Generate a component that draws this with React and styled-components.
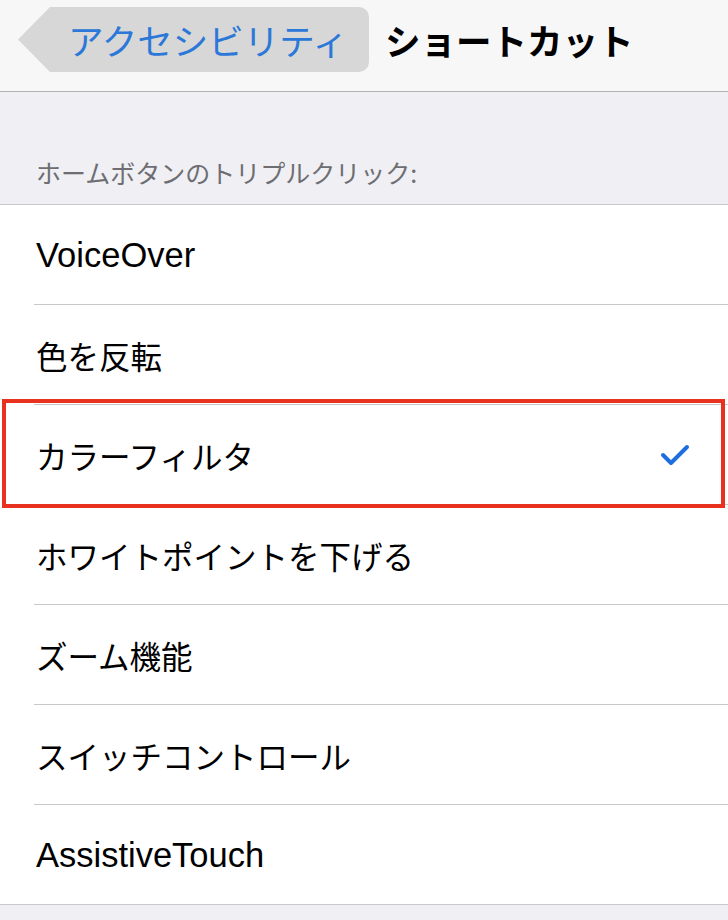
import React from "react";
import styled, { createGlobalStyle } from "styled-components";

const GlobalStyle = createGlobalStyle`
  html, body {
    margin: 0;
    padding: 0;
    background: #efeff4;
  }
  body {
    font-family: "Liberation Sans", "Noto Sans CJK JP", sans-serif;
    -webkit-font-smoothing: antialiased;
  }
`;

const Page = styled.div`
  width: 728px;
  min-height: 920px;
  background: #efeff4;
`;

const NavBar = styled.div`
  height: 91px;
  background: #f7f7f7;
  border-bottom: 1px solid #b2b2b2;
  display: flex;
  align-items: center;
  padding-left: 18px;
  gap: 16px;
  box-sizing: content-box;
`;

const BackButton = styled.div`
  height: 65px;
  margin-top: -12px;
  display: flex;
  align-items: center;
  padding: 0 21px 0 50px;
  background: #d7d7d7;
  border-radius: 0 10px 10px 0;
  clip-path: polygon(0 50%, 32px 0, 100% 0, 100% 100%, 32px 100%);
  color: #2b78d8;
  font-family: "Noto Sans CJK JP", sans-serif;
  font-size: 35.5px;
  line-height: 1;
`;

const Title = styled.div`
  margin-top: -12px;
  font-family: "Noto Sans CJK JP", sans-serif;
  font-weight: 700;
  font-size: 35.5px;
  color: #000;
  line-height: 1;
`;

const SectionHeader = styled.div`
  height: 112px;
  display: flex;
  align-items: flex-end;
  padding: 0 0 14px 36px;
  box-sizing: border-box;
  font-family: "Noto Sans CJK JP", sans-serif;
  font-size: 25px;
  color: #6d6d72;
`;

const List = styled.div`
  background: #fff;
  border-top: 1px solid #c8c7cc;
`;

const Row = styled.div`
  position: relative;
  height: 100px;
  display: flex;
  align-items: center;
  justify-content: space-between;
  padding: 0 38px 0 36px;
  box-sizing: border-box;
  font-size: ${(p) => (p.$latin ? "34.5px" : "31.5px")};
  font-family: ${(p) =>
    p.$latin
      ? `"Liberation Sans", "Noto Sans CJK JP", sans-serif`
      : `"Noto Sans CJK JP", sans-serif`};
  color: #000;

  &::before {
    content: "";
    position: absolute;
    left: ${(p) => (p.$last ? "0" : "34px")};
    right: 0;
    bottom: 0;
    height: 1px;
    background: #c8c7cc;
  }

  ${(p) =>
    p.$marked &&
    `
    &::after {
      content: "";
      position: absolute;
      top: -6px;
      bottom: -3px;
      left: 2px;
      right: 3px;
      border: 4px solid #e8321f;
    }
  `}
`;

const Check = () => (
  <svg width="30" height="24" viewBox="0 0 30 24">
    <polyline
      points="3,12 11,20 27,4"
      fill="none"
      stroke="#1d6fe0"
      strokeWidth="4"
      strokeLinecap="round"
      strokeLinejoin="round"
    />
  </svg>
);

const items = [
  { label: "VoiceOver", latin: true },
  { label: "色を反転" },
  { label: "カラーフィルタ", checked: true },
  { label: "ホワイトポイントを下げる" },
  { label: "ズーム機能" },
  { label: "スイッチコントロール" },
  { label: "AssistiveTouch", latin: true },
];

export default function App() {
  return (
    <Page>
      <GlobalStyle />
      <NavBar>
        <BackButton>アクセシビリティ</BackButton>
        <Title>ショートカット</Title>
      </NavBar>
      <SectionHeader>ホームボタンのトリプルクリック:</SectionHeader>
      <List>
        {items.map((it, i) => (
          <Row
            key={it.label}
            $latin={it.latin}
            $marked={it.checked}
            $last={i === items.length - 1}
          >
            <span>{it.label}</span>
            {it.checked && <Check />}
          </Row>
        ))}
      </List>
    </Page>
  );
}
